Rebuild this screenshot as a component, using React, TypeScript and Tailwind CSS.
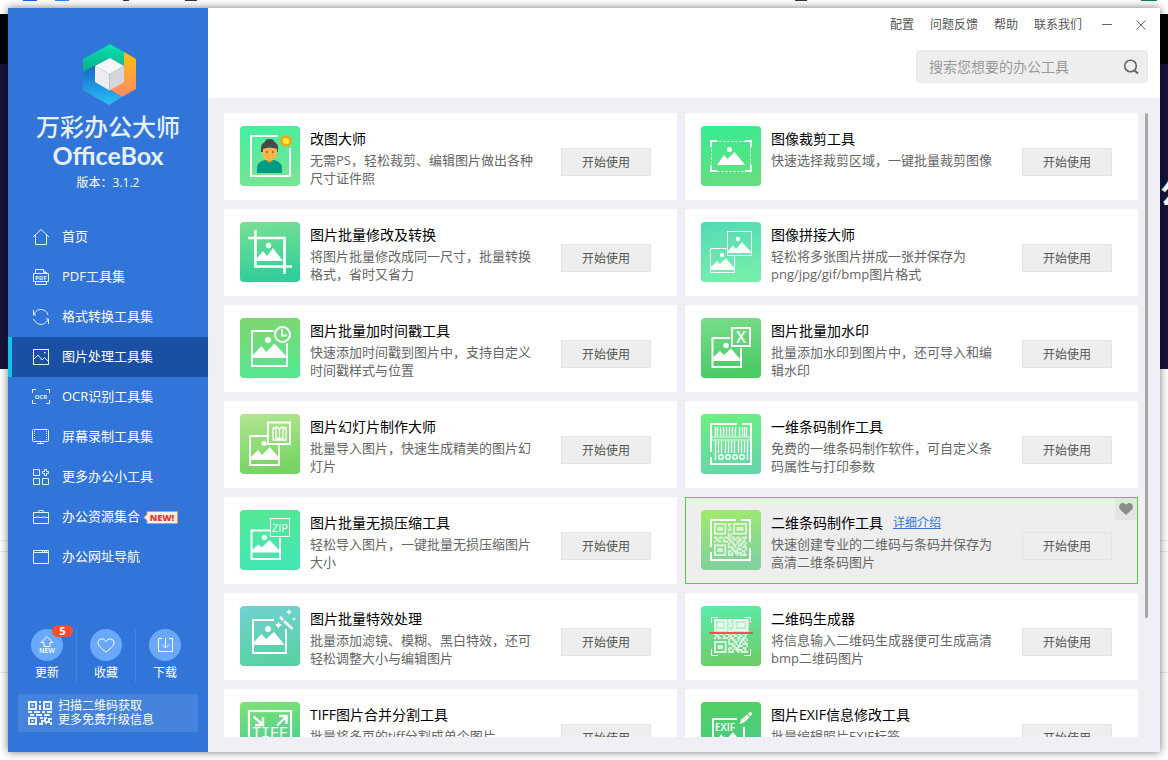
import React, { useState } from 'react';
import clsx from 'clsx';

const FONT = "font-['Open_Sans','Noto_Sans_CJK_SC',sans-serif]";

/* ---------- shared drawing parts ---------- */

const QR_ROWS = [
  '1111111011011111111',
  '1000001010010000001',
  '1011101001010111101',
  '1011101011010111101',
  '1000001000010000001',
  '1111111010111111111',
  '0000000011000000000',
  '1101101110110110111',
  '0110010011011011010',
  '1011011101100110110',
  '0000000010110101101',
  '1111111010011011010',
  '1000001011101010111',
  '1011101000110111001',
  '1011101011011100110',
  '1000001010101111010',
  '1111111011100101111',
];

const QrPattern = ({ x, y, size, color = '#fff' }: { x: number; y: number; size: number; color?: string }) => (
  <svg x={x} y={y} width={size} height={size} viewBox="0 0 19 17" preserveAspectRatio="none">
    {QR_ROWS.map((row, r) =>
      row.split('').map((cell, c) =>
        cell === '1' ? <rect key={`${r}-${c}`} x={c} y={r} width="1.05" height="1.05" fill={color} /> : null
      )
    )}
  </svg>
);

type TileProps = { id: string; from: string; to: string; children: React.ReactNode };

const Tile = ({ id, from, to, children }: TileProps) => (
  <svg width="60" height="60" viewBox="0 0 60 60" className="shrink-0" aria-hidden="true">
    <defs>
      <linearGradient id={id} x1="0" y1="0" x2="0.15" y2="1">
        <stop offset="0" stopColor={from} />
        <stop offset="1" stopColor={to} />
      </linearGradient>
    </defs>
    <rect width="60" height="60" rx="4" fill={`url(#${id})`} />
    {children}
  </svg>
);

const TILE_TEXT = "font-['Open_Sans',sans-serif]";

/* ---------- tool icons ---------- */

const PortraitIcon = () => (
  <Tile id="portrait" from="#41ef9e" to="#76e595">
    <path d="M38 10H11V50H50V22" fill="none" stroke="#fff" strokeWidth="2" />
    <path d="M17 47V42C17 37 21 35 25 34H34C39 35 42 38 42 42V47Z" fill="#009b85" />
    <path d="M26 32H33V34Q29.500 39 26 34Z" fill="#f29100" />
    <path d="M22 22H37V26Q37 34 29.500 35Q22 34 22 26Z" fill="#fdb54e" />
    <path d="M21 26V21Q22 17 25 16Q25 13 29.500 13Q34 13 34.500 16Q38 18 38 21V26H37V23Q30 20 23 23V26Z" fill="#444a4e" />
    <circle cx="27" cy="26" r="1" fill="#8a5528" />
    <circle cx="33" cy="26" r="1" fill="#8a5528" />
    <circle cx="46" cy="15" r="5" fill="#ffa000" stroke="#ffa000" strokeWidth="2" strokeDasharray="2.200 1.700" />
    <circle cx="46" cy="15" r="3.200" fill="#ffeb3b" />
  </Tile>
);

const CropIcon = () => (
  <Tile id="crop" from="#79e095" to="#33cd98">
    <path d="M8 16H44.500V52M15.500 8V44.500H52" fill="none" stroke="#fff" strokeWidth="2.700" />
    <circle cx="28.500" cy="23.500" r="2.700" fill="#fff" />
    <path d="M17 39V36L23 29L27 34L33 26L43 39Z" fill="#fff" />
  </Tile>
);

const TimestampIcon = () => (
  <Tile id="timestamp" from="#80d56e" to="#56e68f">
    <path d="M34 13H12V48H47V25" fill="none" stroke="#fff" strokeWidth="2" />
    <circle cx="42.500" cy="16.500" r="7.500" fill="none" stroke="#fff" strokeWidth="2" />
    <path d="M42 11V17.500H47" fill="none" stroke="#fff" strokeWidth="2" />
    <circle cx="28" cy="22" r="3" fill="#fff" />
    <path d="M13 40V37L21.500 28L26 34L34.500 25.500L46 38V40Z" fill="#fff" />
  </Tile>
);

const SlideshowIcon = () => (
  <Tile id="slideshow" from="#b3e590" to="#76d463">
    <path d="M27 22H10V51H39V31" fill="none" stroke="#fff" strokeWidth="2" />
    <rect x="28" y="8.500" width="22" height="21.500" fill="none" stroke="#fff" strokeWidth="2" />
    <path d="M39.500 15V26M39.500 15Q38 13 36 13V24Q38 24 39.500 26M39.500 15Q41 13 43 13V24Q41 24 39.500 26M36 14H33V26H46V14H43" fill="none" stroke="#fff" strokeWidth="1.300" />
    <circle cx="24" cy="29.500" r="2.500" fill="#fff" />
    <path d="M11 46V43L18 36L22 41L30 33L38 43V46Z" fill="#fff" />
  </Tile>
);

const ZipIcon = () => (
  <Tile id="zip" from="#54e891" to="#43e6b4">
    <path d="M30 20.500H11.500V49H40V28" fill="none" stroke="#fff" strokeWidth="2" />
    <rect x="30.500" y="8.500" width="19" height="18" fill="none" stroke="#fff" strokeWidth="1" />
    <text x="40" y="22" textAnchor="middle" fontSize="11" fill="#fff" className={TILE_TEXT}>ZIP</text>
    <circle cx="24.500" cy="27.500" r="2.700" fill="#fff" />
    <path d="M12 42.500V40L18.500 34.500L22 37.500L29.500 30L39 40V42.500Z" fill="#fff" />
  </Tile>
);

const Star = ({ x, y, r }: { x: number; y: number; r: number }) => (
  <path
    d={`M${x} ${y - r}L${x + r / 3} ${y - r / 3}L${x + r} ${y}L${x + r / 3} ${y + r / 3}L${x} ${y + r}L${x - r / 3} ${y + r / 3}L${x - r} ${y}L${x - r / 3} ${y - r / 3}Z`}
    fill="#fff"
  />
);

const EffectsIcon = () => (
  <Tile id="effects" from="#70d1d1" to="#5ad1a4">
    <path d="M34 14H13V47H46V23" fill="none" stroke="#fff" strokeWidth="2" />
    <path d="M40 11L43 14" stroke="#fff" strokeWidth="2.500" />
    <path d="M44 15L52.500 23" stroke="#fff" strokeWidth="2.500" />
    <Star x={38.5} y={19} r={3.5} />
    <Star x={49} y={6} r={3} />
    <Star x={54} y={13} r={2} />
    <circle cx="28" cy="23" r="3" fill="#fff" />
    <path d="M14 39V36L21.500 28L26 33L34 26L44 38V39Z" fill="#fff" />
  </Tile>
);

const TiffIcon = () => (
  <Tile id="tiff" from="#7ee175" to="#42cd94">
    <rect x="9" y="9" width="42" height="44" fill="none" stroke="#fff" strokeWidth="2.200" />
    <path d="M13.500 14.500L22 22M15 23H23V15M37 23.500L46 15M39 14H46.500V22" fill="none" stroke="#fff" strokeWidth="2.400" />
    <text x="30" y="35" textAnchor="middle" fontSize="15" fill="#fff" className="font-['Liberation_Mono',monospace]">TIFF</text>
  </Tile>
);

const CutImageIcon = () => (
  <Tile id="cutimage" from="#37ec92" to="#64de80">
    <rect x="10.500" y="15.500" width="39" height="30" fill="none" stroke="#fff" strokeWidth="1" strokeDasharray="2 2" />
    <path d="M10 21V15H16M44 15H50V21M50 39V45H44M16 45H10V39" fill="none" stroke="#fff" strokeWidth="2" />
    <circle cx="28.500" cy="23.500" r="2.600" fill="#fff" />
    <path d="M16 39L23 29L26.500 33L33.500 26L44 39Z" fill="#fff" />
  </Tile>
);

const StitchIcon = () => (
  <Tile id="stitch" from="#54dab5" to="#74eeab">
    <rect x="26.500" y="9.500" width="24" height="24" fill="none" stroke="#fff" />
    <path d="M26 26.500H9.500V50.500H33.500V34" fill="none" stroke="#fff" />
    <circle cx="37" cy="17" r="2.200" fill="#fff" />
    <path d="M27 31V29L32 23.500L35 27L41 20L50 30V31Z" fill="#fff" />
    <circle cx="21" cy="33" r="2.200" fill="#fff" />
    <path d="M10 48V45L16 39L19 42L25 36L33 46V48Z" fill="#fff" />
  </Tile>
);

const WatermarkIcon = () => (
  <Tile id="watermark" from="#78de88" to="#4bca66">
    <path d="M29 20H11.500V49H40V30" fill="none" stroke="#fff" strokeWidth="2" />
    <rect x="31" y="10" width="18" height="18" fill="none" stroke="#fff" strokeWidth="2" />
    <text x="40" y="25" textAnchor="middle" fontSize="16" fontWeight="600" fill="#fff" className={TILE_TEXT}>X</text>
    <circle cx="25" cy="27.500" r="2.700" fill="#fff" />
    <path d="M12.500 43V39L19 33L23 37L30 30.500L39 41V43Z" fill="#fff" />
  </Tile>
);

const BarcodeIcon = () => (
  <Tile id="barcode" from="#6cf082" to="#66d7a6">
    <path d="M36 10H10V38M10 43V50H50V10H41" fill="none" stroke="#fff" strokeWidth="2" />
    <path d="M11 23H49M11 26H49" stroke="#fff" />
    <path d="M14.500 13V22M16.500 13V22M19.500 13V22M22.500 13V22M25.500 13V22M28.500 13V22M31.500 13V22M34.500 13V22M38.500 13V22M41.500 13V22M43.500 13V22M45.500 13V22" stroke="#fff" strokeWidth="1.300" />
    <path d="M14.500 27V46M17.500 27V39M20.500 27V39M24.500 27V39M27.500 27V39M30.500 27V39M33.500 27V39M37.500 27V39M40.500 27V39M43.500 27V39M46.500 27V46" stroke="#fff" strokeWidth="1.300" />
    {[20, 27, 34, 41].map((cx) => (
      <circle key={cx} cx={cx} cy="43" r="2.300" fill="none" stroke="#fff" strokeWidth="1.400" />
    ))}
  </Tile>
);

const QrMakerIcon = () => (
  <Tile id="qrmaker" from="#a1ea6c" to="#80d19e">
    <path d="M35 10H10V37M10 42V50H49V38M40 10H49V32" fill="none" stroke="#fff" strokeWidth="2" />
    <QrPattern x={13} y={13} size={33} color="#ffffffb8" />
  </Tile>
);

const QrScanIcon = () => (
  <Tile id="qrscan" from="#5becab" to="#6bce6c">
    <path d="M10.500 17V11.500H17M43 11.500H49.500V17M49.500 43V49.500H43M17 49.500H10.500V43" fill="none" stroke="#fff" />
    <rect x="13" y="13" width="35" height="13" fill="#ffffff80" />
    <QrPattern x={13} y={13} size={34} color="#ffffffc8" />
    <path d="M8 27H52" stroke="#f0564f" strokeWidth="2" />
  </Tile>
);

const ExifIcon = () => (
  <Tile id="exif" from="#4fd15e" to="#49cb8c">
    <path d="M36 17H12V53H43V25" fill="none" stroke="#fff" strokeWidth="2" />
    <text x="14" y="29" fontSize="10" fontWeight="600" fill="#fff" className={TILE_TEXT}>EXIF</text>
    <path d="M38.500 22L40.500 17.500L46 12.500L48.500 15.500L43 20.500Z" fill="#fff" />
    <path d="M47 12L49.500 9.500L51.500 12L49 14.500Z" fill="#fff" />
    <path d="M14 43L20 32L25 38L32 30L42 43Z" fill="#fff" />
  </Tile>
);

/* ---------- sidebar icons ---------- */

const NavSvg = ({ children }: { children: React.ReactNode }) => (
  <svg width="18" height="18" viewBox="0 0 18 18" fill="none" stroke="#e6f0ff" strokeWidth="1" className="shrink-0" aria-hidden="true">
    {children}
  </svg>
);

const navItems = [
  {
    label: '首页',
    icon: <NavSvg><path d="M1 9L9 1.500L17 9M3.500 7V16.500H14.500V7" /></NavSvg>,
  },
  {
    label: 'PDF工具集',
    icon: (
      <NavSvg>
        <path d="M3.500 5.500V1.500H11L14.500 4.500V5.500M11.500 1.500V4.500H14.500M1.500 5.500H16.500V13.500H1.500ZM3.500 14V16.500H14.500V14" />
        <text x="9" y="12" textAnchor="middle" fontSize="6" fontWeight="700" fill="#e6f0ff" stroke="none" className={TILE_TEXT}>PDF</text>
      </NavSvg>
    ),
  },
  {
    label: '格式转换工具集',
    icon: <NavSvg><path d="M1.500 2V7H4M2 6.500C4 2 7 1.500 9 1.500C12 1.500 15 3.500 16 7M16.500 16V11H14M16 11.500C14 15.500 11 16.500 9 16.500C6 16.500 3 14.500 1.500 11" /></NavSvg>,
  },
  {
    label: '图片处理工具集',
    icon: (
      <NavSvg>
        <rect x="1.500" y="1.500" width="15" height="15" />
        <path d="M2 11L6 7L10 12L12.500 9.500L16 13" />
        <rect x="12" y="4" width="1.500" height="1.500" fill="#e6f0ff" stroke="none" />
      </NavSvg>
    ),
  },
  {
    label: 'OCR识别工具集',
    icon: (
      <NavSvg>
        <path d="M.5 5V1.500H4M14 1.500H17.500V5M17.500 12V15.500H14M4 15.500H.5V12" />
        <text x="9" y="11" textAnchor="middle" fontSize="6" fontWeight="700" fill="#e6f0ff" stroke="none" className={TILE_TEXT}>OCR</text>
      </NavSvg>
    ),
  },
  {
    label: '屏幕录制工具集',
    icon: (
      <NavSvg>
        <rect x=".5" y="1.500" width="16" height="12" rx="1" />
        <path d="M2.500 3V12M14.500 3V12" strokeDasharray="1 1" />
        <path d="M8.500 14V15.500M5 15.500H12" />
      </NavSvg>
    ),
  },
  {
    label: '更多办公小工具',
    icon: <NavSvg><path d="M1.500 1.500H7.500V7.500H1.500ZM1.500 10.500H7.500V16.500H1.500ZM10.500 10.500H16.500V16.500H10.500ZM12.500 1.500H14.500V3.500H16.500V5.500H14.500V7.500H12.500V5.500H10.500V3.500H12.500Z" /></NavSvg>,
  },
  {
    label: '办公资源集合',
    isNew: true,
    icon: <NavSvg><path d="M1.500 4.500H16.500V15.500H1.500ZM6 4.500L7 2.500H11L12 4.500M1.500 9.500H5M7 9.500H11M13 9.500H16.500M6 8V10M12 8V10" /></NavSvg>,
  },
  {
    label: '办公网址导航',
    icon: <NavSvg><path d="M1.500 2.500H16.500V15.500H1.500ZM1.500 4.500H16.500M10.500 2.500V4.500M12.500 2.500V4.500M14.500 2.500V4.500" /></NavSvg>,
  },
];

const quickActions = [
  {
    label: '更新',
    badge: 5,
    icon: (
      <>
        <path d="M16 7.500L22 13.500H19V17.500H13V13.500H10Z" />
        <text x="16" y="24" textAnchor="middle" fontSize="7" fontWeight="600" fill="#fff" stroke="none" className={TILE_TEXT}>NEW</text>
      </>
    ),
  },
  {
    label: '收藏',
    icon: <path d="M16 23C12 20 8 17 8 13.500C8 9.500 14 8.500 16 12.500C18 8.500 24 9.500 24 13.500C24 17 20 20 16 23Z" />,
  },
  {
    label: '下载',
    icon: <path d="M13 9.500H9.500V22.500H23.500V9.500H20M16.500 9V19M13 15.500L16.500 19L20 15.500" />,
  },
];

const Logo = () => (
  <svg width="54" height="62" viewBox="0 0 54 62" className="ml-1" aria-hidden="true">
    <defs>
      <linearGradient id="logo-green" x1="0" y1="0" x2="0" y2="1">
        <stop offset="0" stopColor="#07e3b4" />
        <stop offset="1" stopColor="#07ad84" />
      </linearGradient>
      <linearGradient id="logo-orange" x1="0" y1="0" x2="0" y2="1">
        <stop offset="0" stopColor="#ffc107" />
        <stop offset="1" stopColor="#ff8a65" />
      </linearGradient>
      <linearGradient id="logo-blue" x1="0" y1="0" x2="0" y2="1">
        <stop offset="0" stopColor="#1565c8" />
        <stop offset="1" stopColor="#29c1f5" />
      </linearGradient>
    </defs>
    <path d="M0 15L27 0L41 8V22L27 14L0 28Z" fill="url(#logo-green)" />
    <path d="M41 8L53 15V45L39 53L26 45L41 37Z" fill="url(#logo-orange)" />
    <path d="M0 28L12 21.500V37L39 53L26 61L0 46Z" fill="url(#logo-blue)" />
    <path d="M12 22L27 14L41 22L26.500 30Z" fill="#f7f7f8" />
    <path d="M12 22L26.500 30V46.500L12 38Z" fill="#ededee" />
    <path d="M41 22V38L26.500 46.500V30Z" fill="#d6d7da" />
  </svg>
);

/* ---------- data ---------- */

const tools = [
  { title: '改图大师', lines: ['无需PS，轻松裁剪、编辑图片做出各种', '尺寸证件照'], icon: <PortraitIcon /> },
  { title: '图像裁剪工具', lines: ['快速选择裁剪区域，一键批量裁剪图像'], icon: <CutImageIcon /> },
  { title: '图片批量修改及转换', lines: ['将图片批量修改成同一尺寸，批量转换', '格式，省时又省力'], icon: <CropIcon /> },
  { title: '图像拼接大师', lines: ['轻松将多张图片拼成一张并保存为', 'png/jpg/gif/bmp图片格式'], icon: <StitchIcon /> },
  { title: '图片批量加时间戳工具', lines: ['快速添加时间戳到图片中，支持自定义', '时间戳样式与位置'], icon: <TimestampIcon /> },
  { title: '图片批量加水印', lines: ['批量添加水印到图片中，还可导入和编', '辑水印'], icon: <WatermarkIcon /> },
  { title: '图片幻灯片制作大师', lines: ['批量导入图片，快速生成精美的图片幻', '灯片'], icon: <SlideshowIcon /> },
  { title: '一维条码制作工具', lines: ['免费的一维条码制作软件，可自定义条', '码属性与打印参数'], icon: <BarcodeIcon /> },
  { title: '图片批量无损压缩工具', lines: ['轻松导入图片，一键批量无损压缩图片', '大小'], icon: <ZipIcon /> },
  { title: '二维条码制作工具', lines: ['快速创建专业的二维码与条码并保存为', '高清二维条码图片'], icon: <QrMakerIcon />, hovered: true },
  { title: '图片批量特效处理', lines: ['批量添加滤镜、模糊、黑白特效，还可', '轻松调整大小与编辑图片'], icon: <EffectsIcon /> },
  { title: '二维码生成器', lines: ['将信息输入二维码生成器便可生成高清', 'bmp二维码图片'], icon: <QrScanIcon /> },
  { title: 'TIFF图片合并分割工具', lines: ['批量将多页的tiff分割成单个图片'], icon: <TiffIcon /> },
  { title: '图片EXIF信息修改工具', lines: ['批量编辑照片EXIF标签'], icon: <ExifIcon /> },
];

/* ---------- layout ---------- */

// What can be seen of the desktop around the window
const Desktop = () => (
  <div className="absolute inset-0 overflow-hidden bg-white" aria-hidden="true">
    <div className="absolute top-0 left-[23px] h-px w-3.5 bg-[#0a66ff]" />
    <div className="absolute top-0 left-[55px] h-px w-3.5 bg-[#1a8cff]" />
    <div className="absolute top-0 left-[123px] h-px w-1.5 bg-[#333]" />
    <div className="absolute top-0 left-[185px] h-px w-3 bg-[#333]" />
    <div className="absolute top-0 left-[795px] h-px w-3 bg-[#333]" />
    <div className="absolute top-0 right-[11px] h-px w-4 bg-[#00875a]" />
    <div className="absolute inset-x-0 top-3.5 h-[355px] bg-[#14143a]">
      <div className="h-[50px] bg-[#030305]" />
      <span className="absolute top-[154px] -right-6 text-[32px] font-bold text-white">公</span>
    </div>
    <div className="absolute inset-x-0 top-[540px] h-3 border-y border-[#e4e4e4]" />
    <div className="absolute inset-x-0 top-[672px] border-t border-[#e4e4e4]" />
  </div>
);

const Sidebar = () => {
  const [active, setActive] = useState('图片处理工具集');

  return (
    <aside className="flex w-[200px] shrink-0 flex-col bg-[#3275d8] text-white">
      <div className="flex flex-col items-center pt-9">
        <Logo />
        <h1 className="mt-[7px] flex flex-col items-center text-[#e6f0ff]">
          <span className="text-2xl leading-7 font-medium">万彩办公大师</span>
          <span className="text-[25px] leading-7 font-bold font-['Lato',sans-serif]">OfficeBox</span>
        </h1>
        <p className="mt-1 text-xs leading-5">版本：3.1.2</p>
      </div>

      <nav className="mt-6">
        {navItems.map((item) => (
          <a
            key={item.label}
            href="#"
            onClick={() => setActive(item.label)}
            className={clsx(
              'flex h-10 items-center border-l-4 pl-5 text-[13px]',
              active === item.label ? 'border-[#10c4ee] bg-[#1a50a3]' : 'border-transparent'
            )}
          >
            {item.icon}
            <span className="ml-3">{item.label}</span>
            {item.isNew && (
              <svg width="36" height="14" viewBox="0 0 36 14" className="ml-[3px]" role="img" aria-label="NEW!">
                <path d="M1 7.500L4 4.500V1.500H34.500V13.500H4V10.500Z" fill="#fff3e2" stroke="#ee8f6c" />
                <text x="19" y="11" textAnchor="middle" fontSize="9" fontWeight="800" fill="#e03a36" className={TILE_TEXT}>NEW!</text>
              </svg>
            )}
          </a>
        ))}
      </nav>

      <div className="mt-auto flex pl-2.5">
        {quickActions.map((action, i) => (
          <button
            key={action.label}
            type="button"
            className={clsx(
              'flex w-[59px] flex-col items-center border-r text-xs',
              i < quickActions.length - 1 ? 'border-[#4583dc]' : 'border-transparent'
            )}
          >
            <span className="relative size-8 rounded-full bg-[#69a8fd]">
              <svg width="32" height="32" viewBox="0 0 32 32" fill="none" stroke="#fff" aria-hidden="true">
                {action.icon}
              </svg>
              {action.badge && (
                <span className="absolute -top-1 left-[21px] h-3 w-[21px] rounded-full bg-[#fc4b33] text-[11px] leading-3 font-bold">
                  {action.badge}
                </span>
              )}
            </span>
            <span className="mt-[3px] leading-[18px]">{action.label}</span>
          </button>
        ))}
      </div>

      <div className="mx-2.5 mt-3 mb-5 flex h-[38px] items-center gap-1.5 bg-[#4583dc] pl-2.5">
        <svg width="24" height="24" viewBox="0 0 24 24" fill="none" stroke="#e9f2ff" strokeWidth="2" aria-hidden="true">
          <path d="M1 1H8V8H1ZM16 1H23V8H16ZM1 17H8V23H1Z" />
          <path d="M3.500 4.500H5.500M18.500 4.500H20.500M3.500 20H5.500M12 0V2M12 4V9M0 11H4M6 11H12M14 11H17M19 11H24M2 14H6M8 14H14M16 14H22" />
          <path d="M11 23H14V20H17V17H19M18 23V21H21V18H24M23 24V21M12 17H15" />
        </svg>
        <p className="text-xs leading-[14px]">
          扫描二维码获取
          <br />
          更多免费升级信息
        </p>
      </div>
    </aside>
  );
};

const Header = () => (
  <header className="flex h-[90px] shrink-0 flex-col items-end bg-white pr-3">
    <div className="flex h-[33px] items-center gap-4 text-xs text-[#555]">
      <button type="button">配置</button>
      <button type="button">问题反馈</button>
      <button type="button">帮助</button>
      <button type="button">联系我们</button>
      <button type="button" aria-label="最小化" className="ml-1">
        <svg width="10" height="10" viewBox="0 0 10 10" stroke="#666"><path d="M0 4.500H10" /></svg>
      </button>
      <button type="button" aria-label="关闭" className="ml-2">
        <svg width="12" height="10" viewBox="0 0 12 10" stroke="#666"><path d="M.5 .5L9.500 9.500M9.500 .5L.5 9.500" /></svg>
      </button>
    </div>
    <form className="mt-[9px] flex h-[33px] w-[232px] items-center rounded border border-[#e6e6e6] bg-[#eee] pr-2 pl-3">
      <input
        type="text"
        aria-label="搜索"
        placeholder="搜索您想要的办公工具"
        className="min-w-0 flex-1 bg-transparent text-sm text-[#555] outline-none placeholder:text-[#999]"
      />
      <button type="button" aria-label="搜索">
        <svg width="16" height="16" viewBox="0 0 16 16" fill="none" stroke="#666" strokeWidth="1.600">
          <circle cx="7.500" cy="7" r="5.800" />
          <path d="M11.500 11.500L15 14.500" strokeWidth="2" />
        </svg>
      </button>
    </form>
  </header>
);

const ToolCard = ({ tool }: { tool: (typeof tools)[number] }) => (
  <article
    className={clsx(
      'relative flex h-[87px] border pt-3 pr-[25px] pl-[15px]',
      tool.hovered ? 'border-[#4fd03a] bg-[#eee]' : 'border-white bg-white'
    )}
  >
    {tool.icon}
    <div className="ml-2.5 min-w-0 flex-1 pt-1 whitespace-nowrap">
      <h2 className="flex items-center text-sm leading-[18px] text-black">
        {tool.title}
        {tool.hovered && (
          <a href="#" className="ml-2.5 text-xs leading-[18px] text-[#3275d8] underline">详细介绍</a>
        )}
      </h2>
      <p className="mt-[3px] text-[13px] leading-[18px] text-[#666]">
        {tool.lines.map((line) => (
          <span key={line} className="block">{line}</span>
        ))}
      </p>
    </div>
    <button
      type="button"
      className="mt-[22px] h-7 w-[90px] shrink-0 border border-[#e4e4e4] bg-[#eee] pt-0.5 text-xs text-[#555]"
    >
      开始使用
    </button>
    {tool.hovered && (
      <button type="button" aria-label="收藏" className="absolute top-0 right-0 flex size-[22px] items-center justify-center bg-[#e4e4e4]">
        <svg width="14" height="12" viewBox="0 0 14 12" fill="#8c8c8c">
          <path d="M7 12L1 6.500C-1 4 .5 0 3.800 0C5.500 0 6.500 1 7 2C7.500 1 8.500 0 10.200 0C13.500 0 15 4 13 6.500Z" />
        </svg>
      </button>
    )}
  </article>
);

const App = () => (
  <div className={clsx('relative h-screen overflow-hidden p-2', FONT)}>
    <Desktop />
    <div className="relative flex h-full shadow-[0_0_8px_rgba(0,0,0,0.55)]">
      <Sidebar />
      <div className="flex min-w-0 flex-1 flex-col bg-[#f0eff5]">
        <Header />
        <main className="flex min-h-0 flex-1 py-[15px] pr-3 pl-4">
          <div className="grid min-w-0 flex-1 auto-rows-max grid-cols-2 gap-x-2 gap-y-[9px] overflow-hidden">
            {tools.map((tool) => (
              <ToolCard key={tool.title} tool={tool} />
            ))}
          </div>
          <div className="ml-[7px] h-[81%] w-[3px] rounded-full bg-[#a6a6a6]" />
        </main>
      </div>
    </div>
  </div>
);

export default App;
